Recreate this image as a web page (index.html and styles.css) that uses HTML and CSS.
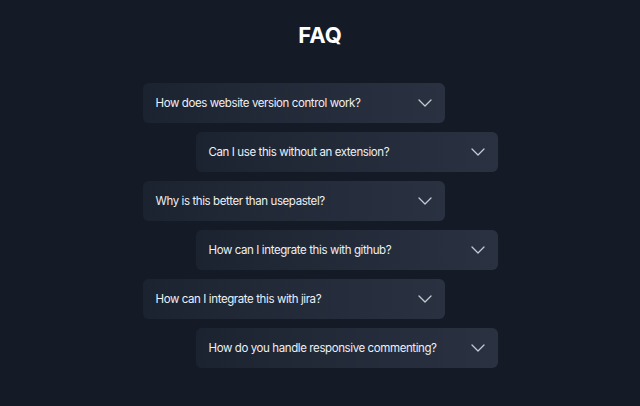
FILE: index.html
```html
<!DOCTYPE html>
<html>
<head>
	<meta charset="utf-8">
	<meta name="viewport" content="width=device-width, initial-scale=1">
	<title>FAQ</title>
	<link rel="stylesheet" href="styles.css">
</head>
<body>

	<main class="faq">
		<h1 class="faq-titulo">FAQ</h1>

		<div class="lista">
			<div class="pregunta izq">
				<span>How does website version control work?</span>
				<svg class="flecha" viewBox="0 0 14 8"><path d="M1 1l6 6 6-6"/></svg>
			</div>
			<div class="pregunta der">
				<span>Can I use this without an extension?</span>
				<svg class="flecha" viewBox="0 0 14 8"><path d="M1 1l6 6 6-6"/></svg>
			</div>
			<div class="pregunta izq">
				<span>Why is this better than usepastel?</span>
				<svg class="flecha" viewBox="0 0 14 8"><path d="M1 1l6 6 6-6"/></svg>
			</div>
			<div class="pregunta der">
				<span>How can I integrate this with github?</span>
				<svg class="flecha" viewBox="0 0 14 8"><path d="M1 1l6 6 6-6"/></svg>
			</div>
			<div class="pregunta izq">
				<span>How can I integrate this with jira?</span>
				<svg class="flecha" viewBox="0 0 14 8"><path d="M1 1l6 6 6-6"/></svg>
			</div>
			<div class="pregunta der">
				<span>How do you handle responsive commenting?</span>
				<svg class="flecha" viewBox="0 0 14 8"><path d="M1 1l6 6 6-6"/></svg>
			</div>
		</div>
	</main>

</body>
</html>
```

FILE: styles.css
```css
body{
	margin: 0;
	background: #151b26;
	font-family: 'Inter', sans-serif;
	color: #eef0f4;
}

/*--------Contenedor-----------*/
.faq{
	display: flex;
	flex-direction: column;
	align-items: center;
	padding-top: 20px;
}
.faq-titulo{
	margin: 0;
	font-size: 22px;
	font-weight: 700;
	line-height: 30px;
	color: #ffffff;
}
.lista{
	width: 355px;
	margin-top: 33px;
	display: flex;
	flex-direction: column;
	gap: 9px;
}
/*--------Contenedor-----------*/

/*--------Preguntas-----------*/
.pregunta{
	width: 302px;
	height: 40px;
	box-sizing: border-box;
	padding: 0 13px 0 13px;
	display: flex;
	align-items: center;
	justify-content: space-between;
	border-radius: 6px;
	background: linear-gradient(90deg, #1c2330 0%, #2a3242 100%);
	font-size: 11.5px;
	font-weight: 400;
	letter-spacing: -0.4px;
}
.izq{
	align-self: flex-start;
}
.der{
	align-self: flex-end;
}
.flecha{
	width: 14px;
	height: 8px;
	fill: none;
	stroke: #c4c9d3;
	stroke-width: 1.3;
	stroke-linecap: round;
	stroke-linejoin: round;
}
/*--------Preguntas-----------*/
```
